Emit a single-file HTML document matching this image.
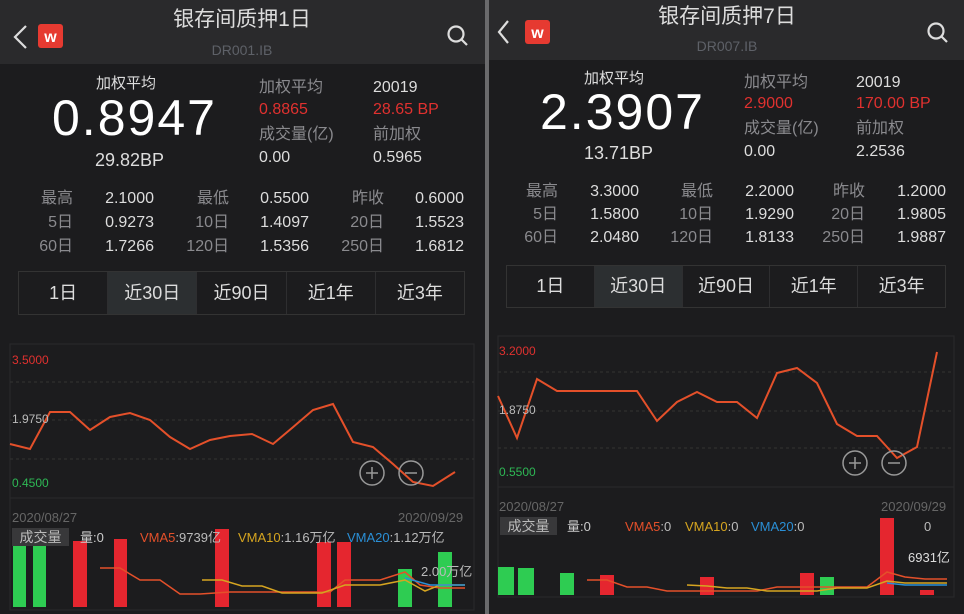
<!DOCTYPE html>
<html><head><meta charset="utf-8"><style>
*{margin:0;padding:0;box-sizing:border-box}
body{width:964px;height:614px;background:#1c1c1e;overflow:hidden;position:relative;font-family:"Liberation Sans","Noto Sans CJK SC",sans-serif;color:#ddd}
.a{position:absolute;white-space:nowrap;line-height:1}
.r{text-align:right}
.g{color:#8a8a8e}
.red{color:#e0312f}
.tabs{position:absolute;display:flex;border:1px solid #333;}
.tabs div{flex:1;text-align:center;color:#ddd;font-size:18px;border-right:1px solid #2e2e30}
.tabs div:last-child{border-right:none}
.tabs .on{background:#2c2f31}
</style></head><body>
<div class="a" style="left:0;top:0;width:485px;height:64px;background:#2a2a2c"></div>
<div class="a" style="left:489px;top:0;width:475px;height:60px;background:#2a2a2c"></div>
<div class="a" style="left:485px;top:0;width:4px;height:614px;background:#6a6a6c"></div>

<svg class="a" style="left:0;top:0" width="964" height="614">
<g fill="none" stroke="#ddd" stroke-width="2.2"><path d="M26 26 L15 37 L26 48"/><path d="M508 21 L499 32 L508 43"/>
<circle cx="456" cy="34" r="7.5"/><path d="M461.5 39.5 L467 45"/><circle cx="936" cy="31" r="7.5"/><path d="M941.5 36.5 L947 42"/></g>
<rect x="38" y="24" width="25" height="24" rx="3" fill="#e63a31"/>
<rect x="525" y="20" width="25" height="24" rx="3" fill="#e63a31"/>
<text x="50.5" y="42" fill="#fff" font-size="16" font-weight="bold" text-anchor="middle" font-family="Liberation Sans">w</text>
<text x="537.5" y="38" fill="#fff" font-size="16" font-weight="bold" text-anchor="middle" font-family="Liberation Sans">w</text>

<rect x="10" y="344" width="464" height="154" fill="none" stroke="#2a2a2c"/>
<g stroke="#333" stroke-dasharray="3,3"><line x1="10" y1="382" x2="474" y2="382"/><line x1="10" y1="420" x2="474" y2="420"/><line x1="10" y1="459" x2="474" y2="459"/></g>
<rect x="10" y="498" width="464" height="112" fill="none" stroke="#2a2a2c"/>
<polyline fill="none" stroke="#e4502a" stroke-width="2" points="10,444 30,449 50,412 70,412 90,430 110,417 130,413 150,420 170,437 190,449 210,440 230,436 252,434 273,444 292,428 313,410 333,404 353,442 373,447 393,464 413,482 433,486 455,472"/>
<g fill="none" stroke="#999" stroke-width="1.5"><circle cx="372" cy="473" r="12"/><circle cx="411" cy="473" r="12"/><path d="M366 473h12M372 467v12M405 473h12"/></g>
<g fill="#2ecc52"><rect x="13" y="546" width="13" height="61"/><rect x="33" y="546" width="13" height="61"/><rect x="398" y="569" width="14" height="38"/><rect x="438" y="552" width="14" height="55"/></g>
<g fill="#e5262f"><rect x="73" y="541" width="14" height="66"/><rect x="114" y="539" width="13" height="68"/><rect x="215" y="529" width="14" height="78"/><rect x="317" y="542" width="14" height="65"/><rect x="337" y="542" width="14" height="65"/></g>
<polyline fill="none" stroke="#e4502a" stroke-width="1.5" points="100,568 120,568 140,580 160,580 180,594 200,594 230,592 300,592 330,592 345,580 380,580 405,572 420,585 440,588 465,588"/>
<polyline fill="none" stroke="#d6a520" stroke-width="1.5" points="202,580 222,580 242,586 262,586 282,593 322,593 345,585 380,585 405,580 425,591 440,585 465,585"/>
<polyline fill="none" stroke="#2a8fd6" stroke-width="1.5" points="405,578 430,585 465,585"/>

<rect x="498" y="336" width="456" height="151" fill="none" stroke="#2a2a2c"/>
<g stroke="#333" stroke-dasharray="3,3"><line x1="498" y1="372" x2="954" y2="372"/><line x1="498" y1="411" x2="954" y2="411"/><line x1="498" y1="448" x2="954" y2="448"/></g>
<rect x="498" y="487" width="456" height="110" fill="none" stroke="#2a2a2c"/>
<polyline fill="none" stroke="#e4502a" stroke-width="2" points="498,396 517,438 537,379 557,391 637,391 657,421 677,402 697,392 717,402 737,402 757,418 777,373 797,368 817,383 837,424 857,436 877,436 897,458 917,447 937,352"/>
<g fill="none" stroke="#999" stroke-width="1.5"><circle cx="855" cy="463" r="12"/><circle cx="894" cy="463" r="12"/><path d="M849 463h12M855 457v12M888 463h12"/></g>
<g fill="#2ecc52"><rect x="498" y="567" width="16" height="28"/><rect x="518" y="568" width="16" height="27"/><rect x="560" y="573" width="14" height="22"/><rect x="820" y="577" width="14" height="18"/></g>
<g fill="#e5262f"><rect x="600" y="575" width="14" height="20"/><rect x="700" y="577" width="14" height="18"/><rect x="800" y="573" width="14" height="22"/><rect x="880" y="518" width="14" height="77"/><rect x="920" y="590" width="14" height="5"/></g>
<polyline fill="none" stroke="#e4502a" stroke-width="1.5" points="587,580 607,580 627,587 647,587 667,591 757,591 777,587 867,587 887,572 905,577 925,579 947,579"/>
<polyline fill="none" stroke="#d6a520" stroke-width="1.5" points="687,585 707,586 727,588 747,588 767,591 817,591 837,588 867,588 887,581 905,583 947,583"/>
<polyline fill="none" stroke="#2a8fd6" stroke-width="1.5" points="887,583 905,585 947,585"/>
</svg>

<div class="a" style="left:142px;top:9px;width:200px;text-align:center;font-size:21px;color:#ddd">银存间质押1日</div>
<div class="a" style="left:142px;top:43px;width:200px;text-align:center;font-size:14px;color:#5e6168">DR001.IB</div>
<div class="a" style="left:96px;top:76px;font-size:15px;color:#ddd">加权平均</div>
<div class="a" style="left:52px;top:93px;font-size:50px;letter-spacing:2px;color:#fff">0.8947</div>
<div class="a" style="left:95px;top:151px;font-size:18px;color:#ddd">29.82BP</div>
<div class="a g" style="left:259px;top:80px;font-size:16px">加权平均</div>
<div class="a" style="left:373px;top:80px;font-size:16px">20019</div>
<div class="a red" style="left:259px;top:102px;font-size:16px">0.8865</div>
<div class="a red" style="left:373px;top:102px;font-size:16px">28.65 BP</div>
<div class="a g" style="left:259px;top:127px;font-size:16px">成交量(亿)</div>
<div class="a g" style="left:373px;top:127px;font-size:16px">前加权</div>
<div class="a" style="left:259px;top:150px;font-size:16px">0.00</div>
<div class="a" style="left:373px;top:150px;font-size:16px">0.5965</div>
<div class="a r g" style="left:0;width:73px;top:187px;font-size:16px;line-height:24px">最高<br>5日<br>60日</div>
<div class="a r" style="left:80px;width:74px;top:187px;font-size:16px;line-height:24px">2.1000<br>0.9273<br>1.7266</div>
<div class="a r g" style="left:150px;width:79px;top:187px;font-size:16px;line-height:24px">最低<br>10日<br>120日</div>
<div class="a r" style="left:230px;width:79px;top:187px;font-size:16px;line-height:24px">0.5500<br>1.4097<br>1.5356</div>
<div class="a r g" style="left:300px;width:84px;top:187px;font-size:16px;line-height:24px">昨收<br>20日<br>250日</div>
<div class="a r" style="left:390px;width:74px;top:187px;font-size:16px;line-height:24px">0.6000<br>1.5523<br>1.6812</div>
<div class="tabs" style="left:18px;top:271px;width:447px;height:44px;line-height:42px"><div>1日</div><div class="on">近30日</div><div>近90日</div><div>近1年</div><div>近3年</div></div>
<div class="a red" style="left:12px;top:354px;font-size:12px">3.5000</div>
<div class="a" style="left:12px;top:413px;font-size:12px;color:#bbb">1.9750</div>
<div class="a" style="left:12px;top:477px;font-size:12px;color:#2eb855">0.4500</div>
<div class="a" style="left:12px;top:511px;font-size:13px;color:#666">2020/08/27</div>
<div class="a" style="left:398px;top:511px;font-size:13px;color:#666">2020/09/29</div>
<div class="a" style="left:12px;top:528px;width:57px;height:18px;background:#38383a;font-size:14px;line-height:18px;text-align:center;color:#bbb">成交量</div>
<div class="a" style="left:80px;top:531px;font-size:13px;color:#ccc">量:0</div>
<div class="a" style="left:140px;top:531px;font-size:13px;color:#bbb"><span style="color:#e4502a">VMA5</span>:9739亿</div>
<div class="a" style="left:238px;top:531px;font-size:13px;color:#bbb"><span style="color:#d6a520">VMA10</span>:1.16万亿</div>
<div class="a" style="left:347px;top:531px;font-size:13px;color:#bbb"><span style="color:#2a8fd6">VMA20</span>:1.12万亿</div>
<div class="a" style="left:421px;top:565px;font-size:13px;color:#bbb">2.00万亿</div>

<div class="a" style="left:627px;top:6px;width:200px;text-align:center;font-size:21px;color:#ddd">银存间质押7日</div>
<div class="a" style="left:627px;top:39px;width:200px;text-align:center;font-size:14px;color:#5e6168">DR007.IB</div>
<div class="a" style="left:584px;top:71px;font-size:15px;color:#ddd">加权平均</div>
<div class="a" style="left:540px;top:87px;font-size:50px;letter-spacing:2px;color:#fff">2.3907</div>
<div class="a" style="left:584px;top:144px;font-size:18px;color:#ddd">13.71BP</div>
<div class="a g" style="left:744px;top:75px;font-size:16px">加权平均</div>
<div class="a" style="left:856px;top:75px;font-size:16px">20019</div>
<div class="a red" style="left:744px;top:96px;font-size:16px">2.9000</div>
<div class="a red" style="left:856px;top:96px;font-size:16px">170.00 BP</div>
<div class="a g" style="left:744px;top:121px;font-size:16px">成交量(亿)</div>
<div class="a g" style="left:856px;top:121px;font-size:16px">前加权</div>
<div class="a" style="left:744px;top:144px;font-size:16px">0.00</div>
<div class="a" style="left:856px;top:144px;font-size:16px">2.2536</div>
<div class="a r g" style="left:480px;width:78px;top:180px;font-size:16px;line-height:23px">最高<br>5日<br>60日</div>
<div class="a r" style="left:560px;width:79px;top:180px;font-size:16px;line-height:23px">3.3000<br>1.5800<br>2.0480</div>
<div class="a r g" style="left:640px;width:73px;top:180px;font-size:16px;line-height:23px">最低<br>10日<br>120日</div>
<div class="a r" style="left:720px;width:74px;top:180px;font-size:16px;line-height:23px">2.2000<br>1.9290<br>1.8133</div>
<div class="a r g" style="left:790px;width:75px;top:180px;font-size:16px;line-height:23px">昨收<br>20日<br>250日</div>
<div class="a r" style="left:870px;width:76px;top:180px;font-size:16px;line-height:23px">1.2000<br>1.9805<br>1.9887</div>
<div class="tabs" style="left:506px;top:265px;width:440px;height:43px;line-height:41px"><div>1日</div><div class="on">近30日</div><div>近90日</div><div>近1年</div><div>近3年</div></div>
<div class="a red" style="left:499px;top:345px;font-size:12px">3.2000</div>
<div class="a" style="left:499px;top:404px;font-size:12px;color:#bbb">1.8750</div>
<div class="a" style="left:499px;top:466px;font-size:12px;color:#2eb855">0.5500</div>
<div class="a" style="left:499px;top:500px;font-size:13px;color:#666">2020/08/27</div>
<div class="a" style="left:881px;top:500px;font-size:13px;color:#666">2020/09/29</div>
<div class="a" style="left:500px;top:517px;width:57px;height:18px;background:#38383a;font-size:14px;line-height:18px;text-align:center;color:#bbb">成交量</div>
<div class="a" style="left:567px;top:520px;font-size:13px;color:#ccc">量:0</div>
<div class="a" style="left:625px;top:520px;font-size:13px;color:#bbb"><span style="color:#e4502a">VMA5</span>:0</div>
<div class="a" style="left:685px;top:520px;font-size:13px;color:#bbb"><span style="color:#d6a520">VMA10</span>:0</div>
<div class="a" style="left:751px;top:520px;font-size:13px;color:#bbb"><span style="color:#2a8fd6">VMA20</span>:0</div>
<div class="a" style="left:924px;top:520px;font-size:13px;color:#bbb">0</div>
<div class="a" style="left:908px;top:551px;font-size:13px;color:#ddd">6931亿</div>
</body></html>
